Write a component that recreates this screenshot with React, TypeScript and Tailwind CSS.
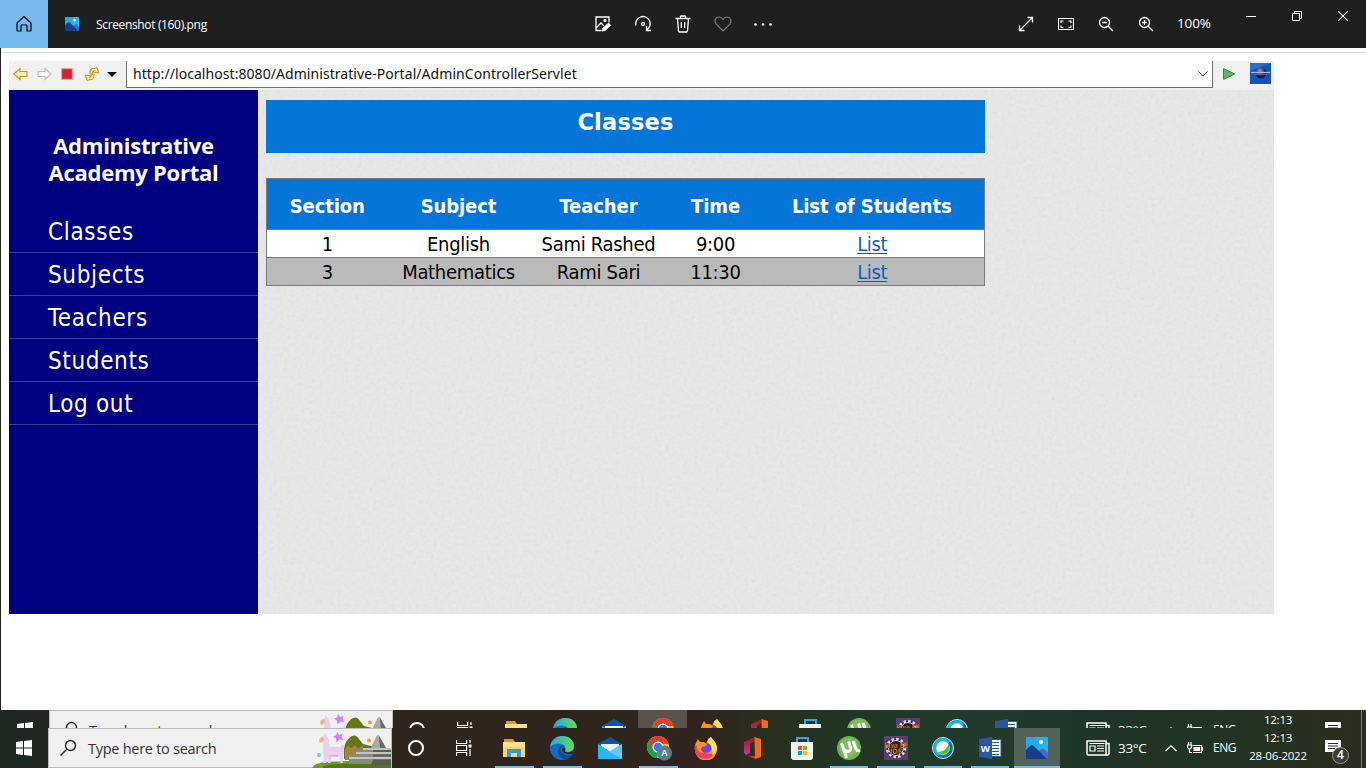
import React from 'react';

type IconProps = { className?: string };

const line = { fill: 'none', stroke: 'currentColor', strokeWidth: 1.2 } as const;

function PhotosLogo({ className }: IconProps) {
  return (
    <svg viewBox="0 0 22 22" className={className}>
      <defs>
        <linearGradient id="sky" x1="0" y1="0" x2="1" y2="1">
          <stop offset="0" stopColor="#1fa5e6" />
          <stop offset="1" stopColor="#35b8f4" />
        </linearGradient>
      </defs>
      <path fill="url(#sky)" d="M0 0h22v22H0z" />
      <path fill="#4a68d0" d="M10 16l5.500-4Q17 11 18.300 12.200L22 15.500V22H10z" />
      <path fill="#153f86" d="M0 13l4.500-4.300q1.500-1.200 3 0L21 22H0z" />
      <circle cx="15" cy="5" r="2.100" fill="#eef9ff" />
    </svg>
  );
}

function ViewerHeader() {
  return (
    <header className="flex h-12 shrink-0 bg-[#1f1f1f] text-white">
      <div className="flex w-12 items-center justify-center bg-[#76b9ed] text-black">
        <svg viewBox="0 0 16 16" className="h-4 w-4" {...line}>
          <path d="M1 7L7.500.8h1L15 7v7.500l-.5.5H11V9.500L10.500 9h-5L5 9.500V15H1.500l-.5-.5z" />
        </svg>
      </div>
      <div className="flex w-[539px] items-center pl-[17px]">
        <PhotosLogo className="h-3.5 w-3.5" />
        <span className="ml-[17px] pt-0.5 font-['Open_Sans',sans-serif] text-[12px] leading-none tracking-[-0.35px]">Screenshot (160).png</span>
      </div>
      <div className="flex w-[200px] items-center">
        <div className="flex w-10 pl-[7px]">
          <svg viewBox="0 0 18 18" className="h-[18px] w-[18px]" {...line} strokeWidth="1.300">
            <path d="M7.500 15.500H2V2h13v5.500M2 13l5-5 3 3" />
            <circle cx="11" cy="5.500" r="1" />
            <path d="M8 16.200l.8-3L14.500 8l2.300 2.300-5.500 5.200z" fill="currentColor" strokeWidth=".6" />
          </svg>
        </div>
        <div className="flex w-10 pl-[7px]">
          <svg viewBox="0 0 18 18" className="h-[18px] w-[18px]" {...line} strokeWidth="1.300">
            <path d="M2 10.500a7.200 7.200 0 1 1 11 4.200M12.500 11v4.500H17" />
            <circle cx="9" cy="9" r="1.500" />
          </svg>
        </div>
        <div className="flex w-10 pl-[7px]">
          <svg viewBox="0 0 18 18" className="h-[18px] w-[18px]" {...line} strokeWidth="1.300">
            <path d="M1.500 3.500h15M3.500 3.500l1 12.500.8 1h7.400l.8-1 1-12.500M6.500 3V1.500l.5-.5h4l.5.5V3M7.300 7v6M10.700 7v6" />
          </svg>
        </div>
        <div className="flex w-10 pl-[7px] text-[#797979]">
          <svg viewBox="0 0 18 18" className="h-[18px] w-[18px]" {...line}>
            <path d="M9 16L2.200 9.200C-.3 6 1.500 2 5 2c2 0 3.200 1 4 2.500C9.800 3 11 2 13 2c3.500 0 5.300 4 2.800 7.200z" />
          </svg>
        </div>
        <div className="flex w-10 pl-[7px]">
          <svg viewBox="0 0 20 18" className="h-[18px] w-5" fill="currentColor">
            <circle cx="1.500" cy="9.500" r="1.300" /><circle cx="9" cy="9.500" r="1.300" /><circle cx="16.500" cy="9.500" r="1.300" />
          </svg>
        </div>
      </div>
      <div className="flex flex-1 items-center justify-end">
        <svg viewBox="0 0 16 16" className="h-4 w-4" {...line} strokeWidth="1.300">
          <path d="M1.500 14.500l13-13M9.500 1.500h5v5M1.500 9.500v5h5" />
        </svg>
        <svg viewBox="0 0 16 12" className="ml-6 h-3 w-4" {...line}>
          <path d="M.5.500h15v11H.5zM3 5V3h2.500M10.500 3H13v2M13 7.500v2h-2.500M5.500 9.500H3v-2" />
        </svg>
        <svg viewBox="0 0 16 16" className="ml-6 h-4 w-4" {...line} strokeWidth="1.300">
          <circle cx="6.500" cy="6.500" r="5" /><path d="M10.200 10.200l4.800 4.800M4 6.500h5" />
        </svg>
        <svg viewBox="0 0 16 16" className="ml-6 h-4 w-4" {...line} strokeWidth="1.300">
          <circle cx="6.500" cy="6.500" r="5" /><path d="M10.200 10.200l4.800 4.800M4 6.500h5M6.500 4v5" />
        </svg>
        <span className="ml-[23px] w-[69px] font-['Open_Sans',sans-serif] text-[13.500px] leading-none tracking-[-0.1px]">100%</span>
        <div className="flex h-full items-start pt-[11px] pr-[18px]">
          <svg viewBox="0 0 10 10" className="mt-px mr-9 h-2.5 w-2.5" {...line} strokeWidth="1"><path d="M0 4.500h10" /></svg>
          <svg viewBox="0 0 10 10" className="mr-9 h-2.5 w-2.5" {...line} strokeWidth="1"><path d="M.5 2.500h7v7h-7zM2.500 2.500v-2h7v7h-2" /></svg>
          <svg viewBox="0 0 10 10" className="h-2.5 w-2.5" {...line} strokeWidth="1.100"><path d="M0 0l10 10M10 0L0 10" /></svg>
        </div>
      </div>
    </header>
  );
}

function BrowserBar() {
  return (
    <div className="flex h-[29px] shrink-0 bg-[#f0f0f0]">
      <div className="flex w-[117px] items-center pl-[4px] pb-[3px]">
        <svg viewBox="0 0 16 14" className="h-3.5 w-4" fill="#fff3bd" stroke="#c8952b" strokeWidth="1.200"><path d="M1 7l6-5.500v3h7v5H7v3z" /></svg>
        <svg viewBox="0 0 16 14" className="ml-[7px] h-3.5 w-4" fill="#fafafa" stroke="#bdbdbd" strokeWidth="1.200"><path d="M15 7L9 1.500v3H2v5h7v3z" /></svg>
        <svg viewBox="0 0 12 12" className="ml-[9px] h-3 w-3"><path fill="#e6a2a4" d="M0 0h12v12H0z" /><path fill="#dc1f2a" stroke="#b9424a" d="M1.500 1.500h9v9h-9z" /></svg>
        <svg viewBox="0 0 16 16" className="ml-[11px] h-4 w-4" fill="#ffe39a" stroke="#c58e30">
          <path d="M6 8V5Q7 1.500 11 2.500l1.500-1.500 2.500 6-6-1 1.500-1.500Q8.500 4.500 8.500 7.500z" />
          <path d="M10 8v3q-1 3.500-5 2.500L3.500 15 1 9l6 1-1.500 1.500q2 0 2-3z" />
        </svg>
        <svg viewBox="0 0 10 5" className="ml-[7px] h-[5px] w-2.5"><path d="M0 0h10L5 5z" /></svg>
      </div>
      <div className="flex h-[27px] w-[1087px] items-center justify-between border-x border-b border-[#6e6e6e] bg-white pl-1.5 pr-1">
        <span className="font-['Noto_Sans',sans-serif] text-[14px] leading-none tracking-[0.06px] text-[#111]">http://localhost:8080/Administrative-Portal/AdminControllerServlet</span>
        <svg viewBox="0 0 10 6" className="h-1.5 w-2.5" fill="none" stroke="#333"><path d="M.5.500L5 5 9.500.500" /></svg>
      </div>
      <div className="flex flex-1 pt-0.5 pl-[9px]">
        <svg viewBox="0 0 14 14" className="mt-1 h-3.5 w-3.5" fill="#5fb56c" stroke="#33873f"><path d="M1.500 1.500L12.500 7l-11 5.500z" /></svg>
        <svg viewBox="0 0 21 21" className="ml-[14px] h-[21px] w-[21px]">
          <defs><radialGradient id="orb" cx=".4" cy=".3"><stop offset="0" stopColor="#ab91d6" /><stop offset="1" stopColor="#211551" /></radialGradient></defs>
          <path fill="#1455b2" d="M0 0h21v21H0z" /><path fill="#2370cf" d="M0 0h21L0 8z" />
          <circle cx="11" cy="10" r="5.500" fill="url(#orb)" />
          <path stroke="#a7b5e2" strokeWidth="1.300" d="M1 9.500h19" /><path stroke="#665cae" d="M5 11.500h12" />
        </svg>
      </div>
    </div>
  );
}

const rows = [
  { id: '1', subject: 'English', teacher: 'Sami Rashed', time: '9:00', bg: 'bg-white' },
  { id: '3', subject: 'Mathematics', teacher: 'Rami Sari', time: '11:30', bg: 'bg-[#bababa]' },
];

function Portal() {
  return (
    <div className="relative flex h-[524px] bg-[#e9e9e9] font-['DejaVu_Sans_Condensed','DejaVu_Sans',sans-serif]">
      <svg className="absolute inset-0 h-full w-full opacity-[0.12]" aria-hidden="true">
        <filter id="paper"><feTurbulence type="fractalNoise" baseFrequency="0.28" numOctaves="3" seed="4" /><feColorMatrix type="saturate" values="0" /></filter>
        <rect width="100%" height="100%" filter="url(#paper)" />
      </svg>
      <nav className="relative w-[249px] bg-[#000080] text-white">
        <h1 className="pt-[42px] text-center font-['Open_Sans',sans-serif] text-[22px] leading-[27px] font-bold tracking-[-0.25px]">
          Administrative<br />Academy Portal
        </h1>
        <ul className="mt-[24px]">
          {['Classes', 'Subjects', 'Teachers', 'Students', 'Log out'].map((item) => (
            <li key={item} className="h-[43px] border-b border-[#3c3c9f] pl-[39px] text-[24px] leading-[45px] tracking-[0.65px]">{item}</li>
          ))}
        </ul>
      </nav>
      <main className="relative ml-2 w-[719px] pt-2.5">
        <h2 className="h-[53px] bg-[#0675d8] text-center font-['DejaVu_Sans',sans-serif] text-[22.500px] leading-[44px] font-bold tracking-[0.2px] text-white">Classes</h2>
        <table className="mt-[25px] w-[718px] table-fixed border-collapse border border-[#7a7a7a] text-center text-[20px]">
          <colgroup>
            <col className="w-[121px]" /><col className="w-[142px]" /><col className="w-[138px]" /><col className="w-[96px]" /><col className="w-[221px]" />
          </colgroup>
          <thead>
            <tr className="h-[51px] border-b border-[#7a7a7a] bg-[#0675d8] text-[20px] tracking-[-0.1px] text-white">
              {['Section', 'Subject', 'Teacher', 'Time', 'List of Students'].map((h) => <th key={h} className="p-0 pt-[3px] leading-none whitespace-nowrap last:pr-1">{h}</th>)}
            </tr>
          </thead>
          <tbody>
            {rows.map((r) => (
              <tr key={r.id} className={`h-7 border-b border-[#7a7a7a] text-black tracking-[-0.3px] ${r.bg}`}>
                <td className="p-0 pt-px leading-[26px]">{r.id}</td>
                <td className="p-0 pt-px leading-[26px]">{r.subject}</td>
                <td className="p-0 pt-px leading-[26px]">{r.teacher}</td>
                <td className="p-0 pt-px leading-[26px]">{r.time}</td>
                <td className="p-0 pt-px pr-[3px] leading-[26px]"><a className="text-[#0b5fc6] underline decoration-1 underline-offset-2">List</a></td>
              </tr>
            ))}
          </tbody>
        </table>
      </main>
    </div>
  );
}

function Llama() {
  return (
    <svg viewBox="0 0 80 40" className="h-10 w-20">
      <path fill="#667618" d="M33 20q2-9 8-12 4-2 7 3l4 5 8 2 6 3v10H33z" />
      <path fill="#9a8544" d="M34 21l3-3 3 2 4-3 3 3 5-2 3 14H34z" />
      <path fill="#aaa9a4" d="M60 20l5-11q2-4 4 0l6 11z" /><path fill="#686a69" d="M68 8l7 12h-6z" />
      <path fill="#719b1d" d="M1 40c4-7 16-6 36-7h43v7z" /><path fill="#4f7712" d="M12 38q30-5 68-1v3H12z" />
      <path fill="#898983" d="M52 20h28v16H38v-9h7v-5h7z" /><path fill="#c4c5bb" d="M52 20h28v2H52zM45 24h35v2H45zM38 29h42v2H38z" />
      <path fill="#565d57" d="M62 22h18v2H62zM62 26.500h18v2H62zM62 31.500h18V37H60z" />
      <path fill="#e8cff0" d="M10 9l3-1 .5-3 2 3 1 1q2 3 2 10h11q1-3 3-2t0 4q1 4-.5 6V35h-2.500l-1-7-8 .5-1 6.500h-2.500v-6l-2 6H12l1-7q-2-5-.5-14L9 13z" />
      <path fill="#d4b3df" d="M18 27l10 0-1 2-8-.5z" /><path fill="#f3b184" d="M8 11l4-2 1 3-2 2.500H8.500z" />
      <path fill="#dc79f5" d="M26 4l2 3 3.500-1-1 3 2 3-4-.5-3 3-.5-4-3-2 3-1z" />
      <circle cx="58" cy="12.500" r="2" fill="#f5a313" /><circle cx="8" cy="27" r="2" fill="#70cce9" />
    </svg>
  );
}

function AppIcon({ name }: { name: string }) {
  const c = 'h-6 w-6';
  switch (name) {
    case 'explorer':
      return <svg viewBox="0 0 24 24" className={c}><path fill="#dc9f13" d="M2 3h9l2 3H2z" /><path fill="#fbd46b" d="M1 6h22v15H1z" /><path fill="#ffe090" d="M1 6h22v5H1z" /><path fill="#3c96d4" d="M5 13h14v8h-4v-4H9v4H5z" /></svg>;
    case 'edge':
      return (
        <svg viewBox="0 0 24 24" className={c}>
          <defs><linearGradient id="edgeTop"><stop stopColor="#24a9e0" /><stop offset="1" stopColor="#62da57" /></linearGradient></defs>
          <circle cx="12" cy="12" r="12" fill="#116fc6" /><path fill="url(#edgeTop)" d="M0 11C1 4 6 0 12 0c8 0 12 5 12 10 0 4-3 6-7 6-2 0-3-1-2-2 3-5-7-10-15-3z" />
          <path fill="#0c4b91" d="M9 12c-3 5 0 12 8 11 3-1 5-3 6-5-6 3-12 0-12-5 0-2 1-3 3-3-2-1-4 0-5 2z" /><path fill="#30251e" d="M14.500 12c2 1 0 3 1 4 3 1 6 0 8.500-2v3c-6 3-12 0-12-4 0-1 1.500-2 2.500-1z" />
        </svg>
      );
    case 'mail':
      return <svg viewBox="0 0 24 24" className={c}><path fill="#0a56a5" d="M0 8l12-7 12 7v3H0z" /><path fill="#f4f4f4" d="M3 8h18v10H3z" /><path fill="#1595e3" d="M0 8l12 8 12-8v15H0z" /><path fill="#2db4f3" d="M0 23V8l24 15z" /><path fill="#5acef8" d="M11 15.500L24 8v15z" /></svg>;
    case 'chrome':
    case 'chromePlain':
      return (
        <svg viewBox="0 0 26 26" className="ml-1 h-[26px] w-[26px]">
          <circle cx="11" cy="12" r="11" fill="#fac51d" /><path fill="#e33b2e" d="M1.500 6.500A11 11 0 0 1 20.500 6.500L22 9H11l-5 5z" /><path fill="#239c4f" d="M1.500 6.500L6.500 14.500 11 17l-1 6A11 11 0 0 1 1.500 6.500z" />
          <circle cx="11" cy="12" r="5.500" fill="#fff" /><circle cx="11" cy="12" r="4.300" fill="#3479e9" />
          {name === 'chrome' && <><circle cx="17.500" cy="18" r="7.500" fill="#607d8b" /><text x="17.500" y="21.200" textAnchor="middle" fontSize="9" fill="#fff" fontFamily="Open Sans" fontWeight="600">A</text></>}
        </svg>
      );
    case 'firefox':
      return <svg viewBox="0 0 24 24" className={c}><path fill="#ff902b" d="M4 3l2 3 4 0 2 2 2-5 3-2c1 3 6 5 6 12a11 11 0 0 1-22 1c-1-4 1-7 3-11z" /><path fill="#f63b59" d="M1 10q5-1 7 2 1 8 13 5c-5 9-22 8-20-7z" /><path fill="#ffe04f" d="M17 1c3 4 6 6 6 12-1 4-4 6-5 7 2-7-2-10-4-12q-1-4 3-7z" /><circle cx="12.500" cy="12" r="5" fill="#7543dc" /><path fill="#ff8b37" d="M4 7q7-1 9 1-1 3-5 3-3 3 2 6-7 0-7-6z" /></svg>;
    case 'office':
      return (
        <svg viewBox="0 0 24 24" className={c}>
          <defs><linearGradient id="officeSide" x2="0" y2="1"><stop stopColor="#a81213" /><stop offset="1" stopColor="#bf3da0" /></linearGradient></defs>
          <path fill="url(#officeSide)" d="M2 6L13 1v4L8 7.500V17l-4 2-2-2z" /><path fill="#e2371f" d="M5 19.500l8.500.8V23z" /><path fill="#f06a20" d="M12.500 1L19 3v18l-6 2z" />
        </svg>
      );
    case 'store':
      return <svg viewBox="0 0 24 24" className={c}><path fill="none" stroke="#28a8ea" strokeWidth="2" d="M7 7V2h11v5" /><path fill="#f4f4f4" d="M1 6h22v15q0 3-3 3H4q-3 0-3-3z" /><path fill="#f25022" d="M8 10h4v4H8z" /><path fill="#7fba00" d="M13 10h4v4h-4z" /><path fill="#00a4ef" d="M8 15h4v4H8z" /><path fill="#ffb900" d="M13 15h4v4h-4z" /></svg>;
    case 'torrent':
      return <svg viewBox="0 0 24 24" className={c}><circle cx="12" cy="12" r="12" fill="#6eb445" /><circle cx="12" cy="11" r="9.500" fill="#82bb63" /><path fill="none" stroke="#fff" strokeWidth="3" d="M4.500 7l5 15M6.500 12.500q3 4.500 6 2.500 2-1.500.5-5L11.500 5.500M16 5l3 8q1 2.500 4 1.500" /></svg>;
    case 'ide':
      return (
        <svg viewBox="0 0 24 24" className={c}>
          <path fill="#5b3c77" d="M0 0h24v24H0z" /><circle cx="12" cy="12" r="9" fill="#241d28" stroke="#e0dce2" strokeWidth="2.500" strokeDasharray="2.500 2.200" /><circle cx="12" cy="12" r="7.500" fill="#211c24" stroke="#ddd" />
          <g fill="#ef8327" stroke="#5a240b" strokeWidth=".3" fontFamily="DejaVu Sans" fontWeight="700" textAnchor="middle"><text x="12" y="11.500" fontSize="7.500" textLength="23" lengthAdjust="spacingAndGlyphs">Java EE</text><text x="12" y="18" fontSize="7.500" textLength="12" lengthAdjust="spacingAndGlyphs">IDE</text></g>
        </svg>
      );
    case 'webex':
      return <svg viewBox="0 0 24 24" className={c}><circle cx="12" cy="12" r="10.500" fill="#087696" stroke="#d7eef3" strokeWidth="1" /><path fill="#12b7e7" d="M2 12A10 10 0 0 1 19 5L8 20Q2 18 2 12z" /><circle cx="12" cy="12" r="6.800" fill="#fff" /><path fill="#5abd40" d="M17.500 8q3 6-2 9.500-6 2-9-1.500 9-.5 11-8z" /></svg>;
    case 'word':
      return <svg viewBox="0 0 24 24" className={c}><path fill="#fff" stroke="#2b579a" d="M12 3.500h11v17H12z" /><path stroke="#2b579a" d="M14 6.500h7M14 9.500h7M14 12.500h7M14 15.500h7M14 18.500h7" /><path fill="#2a569d" d="M1 3l13-2v22L1 21z" /><text x="7.300" y="15.500" textAnchor="middle" fontSize="9.500" fill="#fff" fontFamily="Open Sans" fontWeight="700">W</text></svg>;
    default:
      return <PhotosLogo className="h-[22px] w-[22px]" />;
  }
}

type App = { name: string; cell: string; underline?: string };

const currentApps: App[] = [
  { name: 'explorer', cell: 'w-12', underline: 'w-[39px]' },
  { name: 'edge', cell: 'w-12', underline: 'w-[39px]' },
  { name: 'mail', cell: 'w-12' },
  { name: 'chrome', cell: 'w-12', underline: 'w-[39px]' },
  { name: 'firefox', cell: 'w-12' },
  { name: 'office', cell: 'w-12' },
  { name: 'store', cell: 'w-[47px]' },
  { name: 'torrent', cell: 'w-[47px]', underline: 'w-[38px]' },
  { name: 'ide', cell: 'w-[47px]', underline: 'w-[38px]' },
  { name: 'webex', cell: 'w-[47px]', underline: 'w-[38px]' },
  { name: 'word', cell: 'w-[47px]', underline: 'w-[38px]' },
  { name: 'photos', cell: 'ml-px w-[46px] bg-[#52645a]', underline: 'w-[46px]' },
];

const olderApps: App[] = ['explorer', 'edge', 'mail', 'chromePlain', 'firefox', 'office', 'store', 'torrent', 'ide', 'webex', 'word'].map((name) => ({
  name,
  cell: name === 'chromePlain' ? 'w-[49px] bg-[#5b524c]' : 'w-[49px]',
}));

function Taskbar({ older = false }: { older?: boolean }) {
  return (
    <div className="flex h-10 w-full bg-[linear-gradient(90deg,#1e2820_0px,#20271f_48px,#30251d_392px,#30251e_700px,#293020_770px,#213523_840px,#233a2b_950px,#20352a_1080px,#203423_1200px,#2b2e1e_1366px)] font-['Open_Sans',sans-serif] text-white">
      <div className={older ? 'flex w-[49px] items-center justify-center pl-px' : 'flex w-12 items-center justify-center'}>
        <svg viewBox="0 0 16 16" className="h-4 w-4" fill="#fff"><path d="M0 2l7-1v6.500H0zM8 .9L16 0v7.500H8zM0 8.500h7V15l-7-1zM8 8.500h8V16l-8-1z" /></svg>
      </div>
      <div className="flex h-10 w-[344px] items-center border border-[#bcbcbc] bg-[#f1f1f1]">
        <svg viewBox="0 0 18 18" className="ml-[10px] h-[18px] w-[18px]" fill="none" stroke="#222" strokeWidth="1.400"><circle cx="11.500" cy="6.500" r="5" /><path d="M7.800 10.200L1.500 16.500" /></svg>
        <span className="ml-[11px] flex-1 pt-0.5 text-[14.500px] leading-none tracking-[-0.27px] text-[#333]">Type here to search</span>
        <Llama />
      </div>
      <div className="flex w-12 items-center justify-center"><div className="h-4 w-4 rounded-full border-2 border-white" /></div>
      <div className="flex w-[50px] items-center pl-4">
        <svg viewBox="0 0 16 16" className="h-4 w-4" {...line}><path d="M.6 0v3.500h10V0M.6 5.500h10v5H.6zM.6 16v-3.500h10V16M14 0v3M14 9v7" /><path fill="currentColor" stroke="none" d="M12.500 4.500h3v3h-3z" /></svg>
      </div>
      {(older ? olderApps : currentApps).map((app) => (
        <div key={app.name} className={`relative flex items-center justify-center ${app.cell}`}>
          <AppIcon name={app.name} />
          {app.underline && <div className={`absolute bottom-0 h-0.5 bg-[#76b9ed] ${app.underline}`} />}
        </div>
      ))}
      <div className="flex flex-1 items-center justify-end">
        <svg viewBox="0 0 24 16" className="h-4 w-6" {...line} strokeWidth="1.500"><path d="M1 1h19v14H2l-1-1zM20 3.500h3V14l-1 1h-2" /><path d="M4 6h5v5H4zM11 6h7M11 8.500h7M11 11h7M3.500 3.500h15" strokeWidth="1.200" /></svg>
        <span className="ml-2 w-[47px] pt-0.5 text-[13.500px] leading-none tracking-[-0.3px]">33°C</span>
        <svg viewBox="0 0 12 7" className="h-[7px] w-3" {...line}><path d="M.5 6L6 .8 11.500 6" /></svg>
        <svg viewBox="0 0 16 12" className="ml-[10px] h-3 w-4" {...line}><path d="M5.500 3.500h9v7H6M14.500 5.500h1v3h-1M1.500 0v3M4 0v3M.5 3h4v2.500L3 7H2L.5 5.500zM2.500 7v3.500H5" /><path fill="currentColor" stroke="none" d="M6.500 5h6.500v4H6.500z" /></svg>
        <span className="ml-[10px] w-[35px] text-[12px] leading-none tracking-[-0.5px]">ENG</span>
        <div className="flex h-full w-[60px] flex-col items-center pt-px text-[11.500px] leading-[18px] tracking-[-0.25px] whitespace-nowrap"><span>12:13</span>{!older && <span>28-06-2022</span>}</div>
        <div className="relative ml-[17px] flex w-[36px] pb-px">
          <svg viewBox="0 0 16 16" className="h-4 w-4"><path fill="#fff" d="M0 0h16v12h-4v4l-4-4H0z" /><path stroke="#263426" strokeWidth="1.200" d="M3 3.500h10M3 6h10M3 8.500h7" /></svg>
          {!older && <span className="absolute top-[7px] left-[7px] flex h-[17px] w-[17px] items-center justify-center rounded-full border border-[#999] bg-[#393c38] text-[12px] leading-none font-semibold">4</span>}
        </div>
        <div className="h-full w-[5px] border-l border-[#747b70]" />
      </div>
    </div>
  );
}

export default function App() {
  return (
    <div className="flex h-[768px] w-[1366px] flex-col overflow-hidden bg-white">
      <ViewerHeader />
      <div className="flex h-[662px] shrink-0 flex-col border-l border-[#222]">
        <div className="h-[5px] shrink-0 border-b border-[#dadada]" />
        <div className="mt-2 ml-2 w-[1265px]">
          <BrowserBar />
          <Portal />
        </div>
      </div>
      <div className="h-[18px] shrink-0 overflow-hidden"><Taskbar older /></div>
      <Taskbar />
    </div>
  );
}
